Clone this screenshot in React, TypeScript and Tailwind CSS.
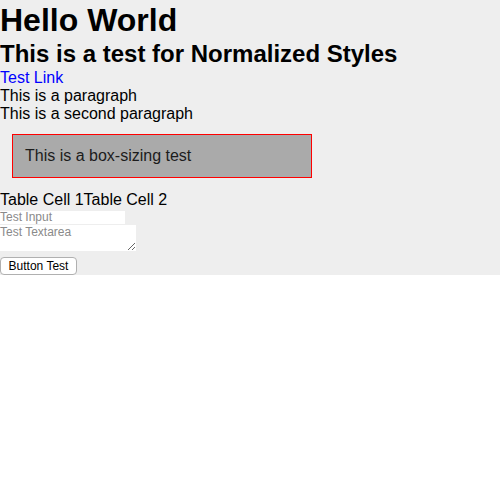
export default function App() {
  return (
    <div className="bg-[#eeeeee] font-['Liberation_Sans',Arial,sans-serif] text-black">
      <h1 className="pt-px text-[32px] font-bold leading-[38px]">Hello World</h1>
      <h2 className="text-[24px] font-bold leading-[29px]">This is a test for Normalized Styles</h2>
      <a href="#" className="block pt-px text-[16px] leading-[18px] text-[#0000ff]">Test Link</a>
      <p className="text-[16px] leading-[18px]">This is a paragraph</p>
      <p className="text-[16px] leading-[17px]">This is a second paragraph</p>
      <div className="m-3 w-[300px] border border-[#ff0000] bg-[#aaaaaa] p-3 text-[16px] leading-[18px] text-[#1c1c1c]">
        This is a box-sizing test
      </div>
      <table className="text-[16px] leading-[18px]">
        <tbody>
          <tr>
            <td className="px-0 py-px">Table Cell 1</td>
            <td className="px-0 py-px">Table Cell 2</td>
          </tr>
        </tbody>
      </table>
      <input
        type="text"
        placeholder="Test Input"
        className="mt-px block h-[13px] w-[125px] bg-white text-[12px] leading-[13px] placeholder:text-[#8a8a8a]"
      />
      <textarea
        placeholder="Test Textarea"
        className="mt-px block h-[26px] w-[136px] bg-white text-[12px] leading-[14px] placeholder:text-[#8a8a8a]"
      />
      <div className="pt-[6px]">
        <button className="block h-[18px] w-[77px] rounded-[4px] border border-[#b0b0b0] bg-white text-[12px] leading-[14px]">
          Button Test
        </button>
      </div>
    </div>
  );
}
